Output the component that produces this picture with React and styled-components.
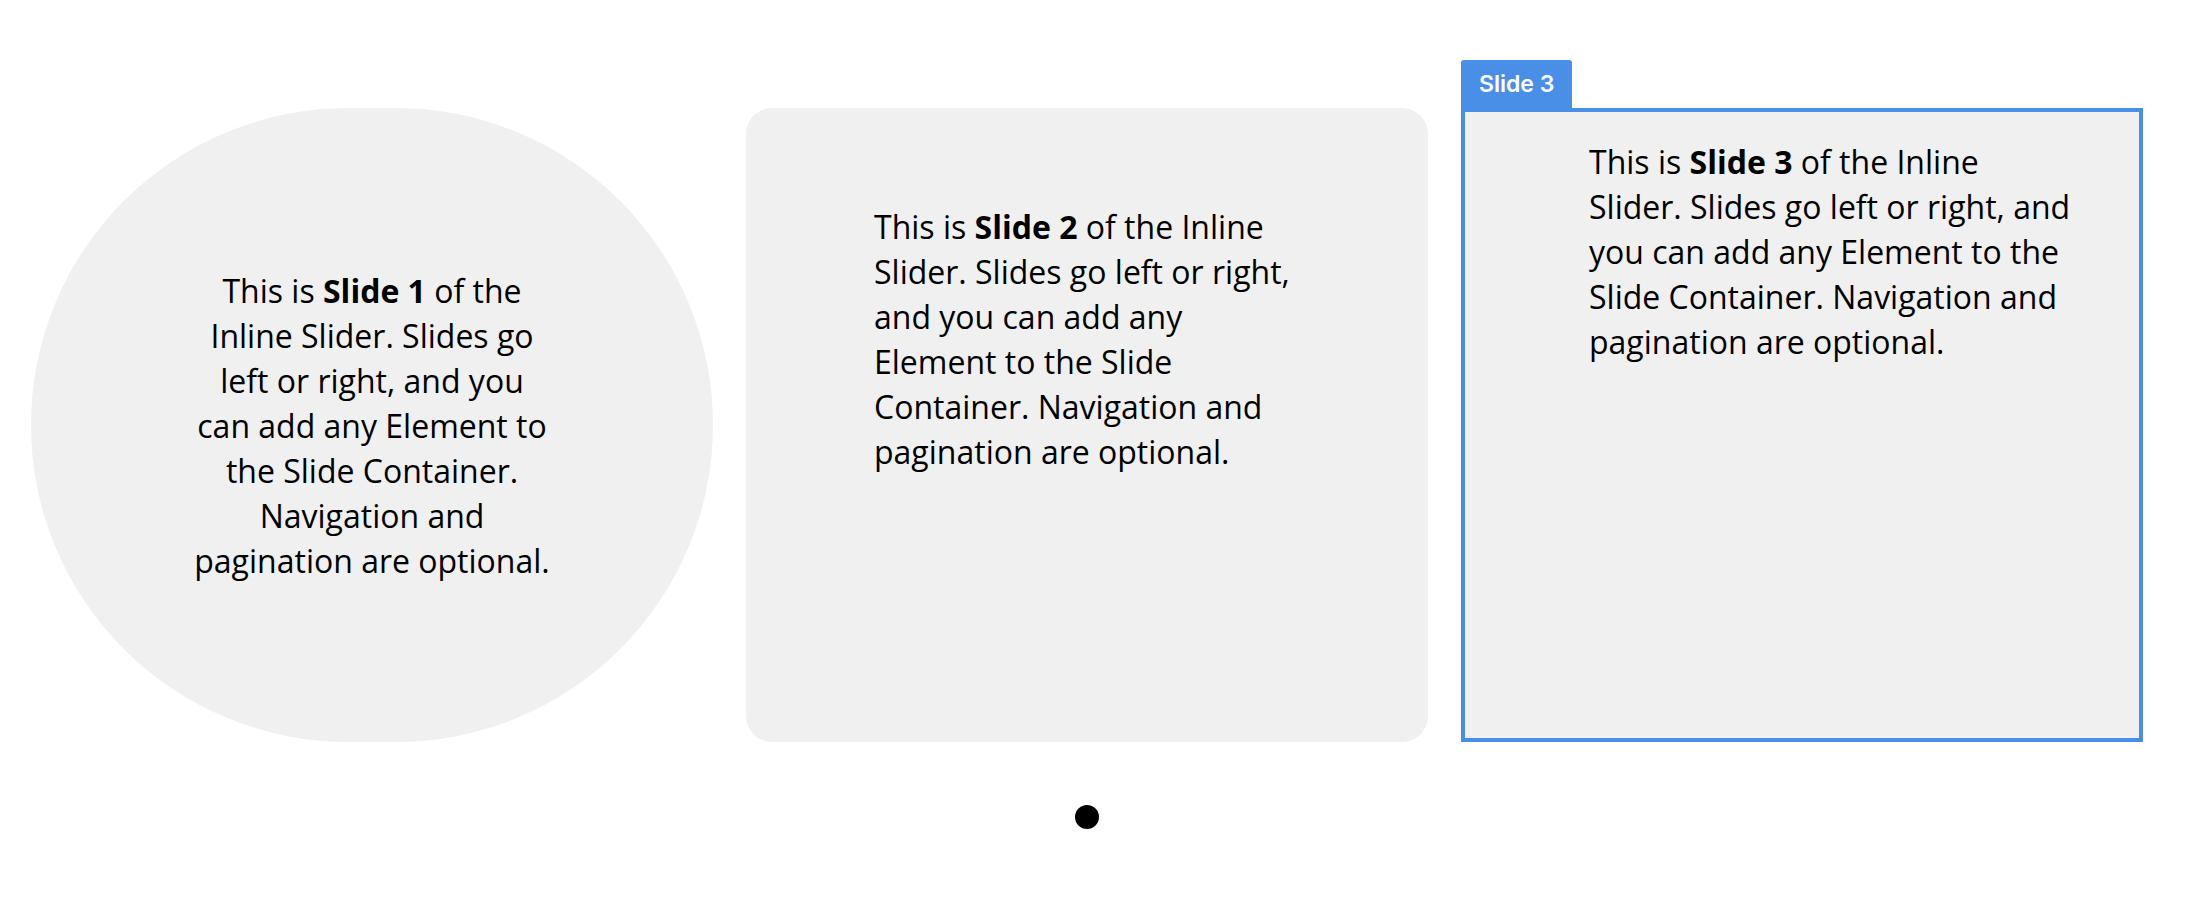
import React from "react";
import styled, { createGlobalStyle } from "styled-components";

const GlobalStyle = createGlobalStyle`
  html, body {
    margin: 0;
    padding: 0;
    background: #ffffff;
  }
  body {
    font-family: "Open Sans", "Liberation Sans", sans-serif;
    color: #000;
  }
`;

const slides = [
  { id: 1, shape: "pill" },
  { id: 2, shape: "rounded" },
  { id: 3, shape: "selected" },
];

const Page = styled.div`
  width: 2112px;
  padding: 108px 0 0 31px;
`;

const Track = styled.div`
  display: flex;
  gap: 33px;
`;

const SlideBox = styled.div`
  position: relative;
  box-sizing: border-box;
  width: 682px;
  height: 634px;
  flex-shrink: 0;
  background: #f0f0f0;
  display: flex;
  font-size: 32px;
  line-height: 45px;

  ${(p) =>
    p.shape === "pill" &&
    `
    border-radius: 9999px;
    align-items: center;
    justify-content: center;
    text-align: center;
  `}

  ${(p) =>
    p.shape === "rounded" &&
    `
    border-radius: 26px;
    padding: 96px 128px 0 128px;
  `}

  ${(p) =>
    p.shape === "selected" &&
    `
    border-radius: 14px;
    padding: 31px 69px 0 128px;
    &::after {
      content: "";
      position: absolute;
      inset: 0;
      border: 4px solid #4a8fe7;
      pointer-events: none;
    }
  `}
`;

const SlideText = styled.p`
  margin: 0;
  width: ${(p) => (p.narrow ? "358px" : "auto")};
`;

const Tag = styled.div`
  position: absolute;
  left: 0;
  top: -48px;
  height: 48px;
  padding: 0 18px;
  display: flex;
  align-items: center;
  background: #4a8fe7;
  border-radius: 3px 3px 0 0;
  color: #fff;
  font-family: Inter, Roboto, "Liberation Sans", sans-serif;
  font-weight: 600;
  font-size: 23px;
  line-height: 1;
`;

const Pagination = styled.div`
  display: flex;
  justify-content: center;
  padding-top: 63px;
`;

const Dot = styled.span`
  width: 24px;
  height: 24px;
  border-radius: 50%;
  background: #000;
`;

export default function App() {
  return (
    <>
      <GlobalStyle />
      <Page>
        <Track>
          {slides.map((s) => (
            <SlideBox key={s.id} shape={s.shape}>
              {s.shape === "selected" && <Tag>Slide {s.id}</Tag>}
              <SlideText narrow={s.shape === "pill"}>
                This is <b>Slide {s.id}</b> of the Inline Slider. Slides go
                left or right, and you can add any Element to the Slide
                Container. Navigation and pagination are optional.
              </SlideText>
            </SlideBox>
          ))}
        </Track>
        <Pagination>
          <Dot />
        </Pagination>
      </Page>
    </>
  );
}
